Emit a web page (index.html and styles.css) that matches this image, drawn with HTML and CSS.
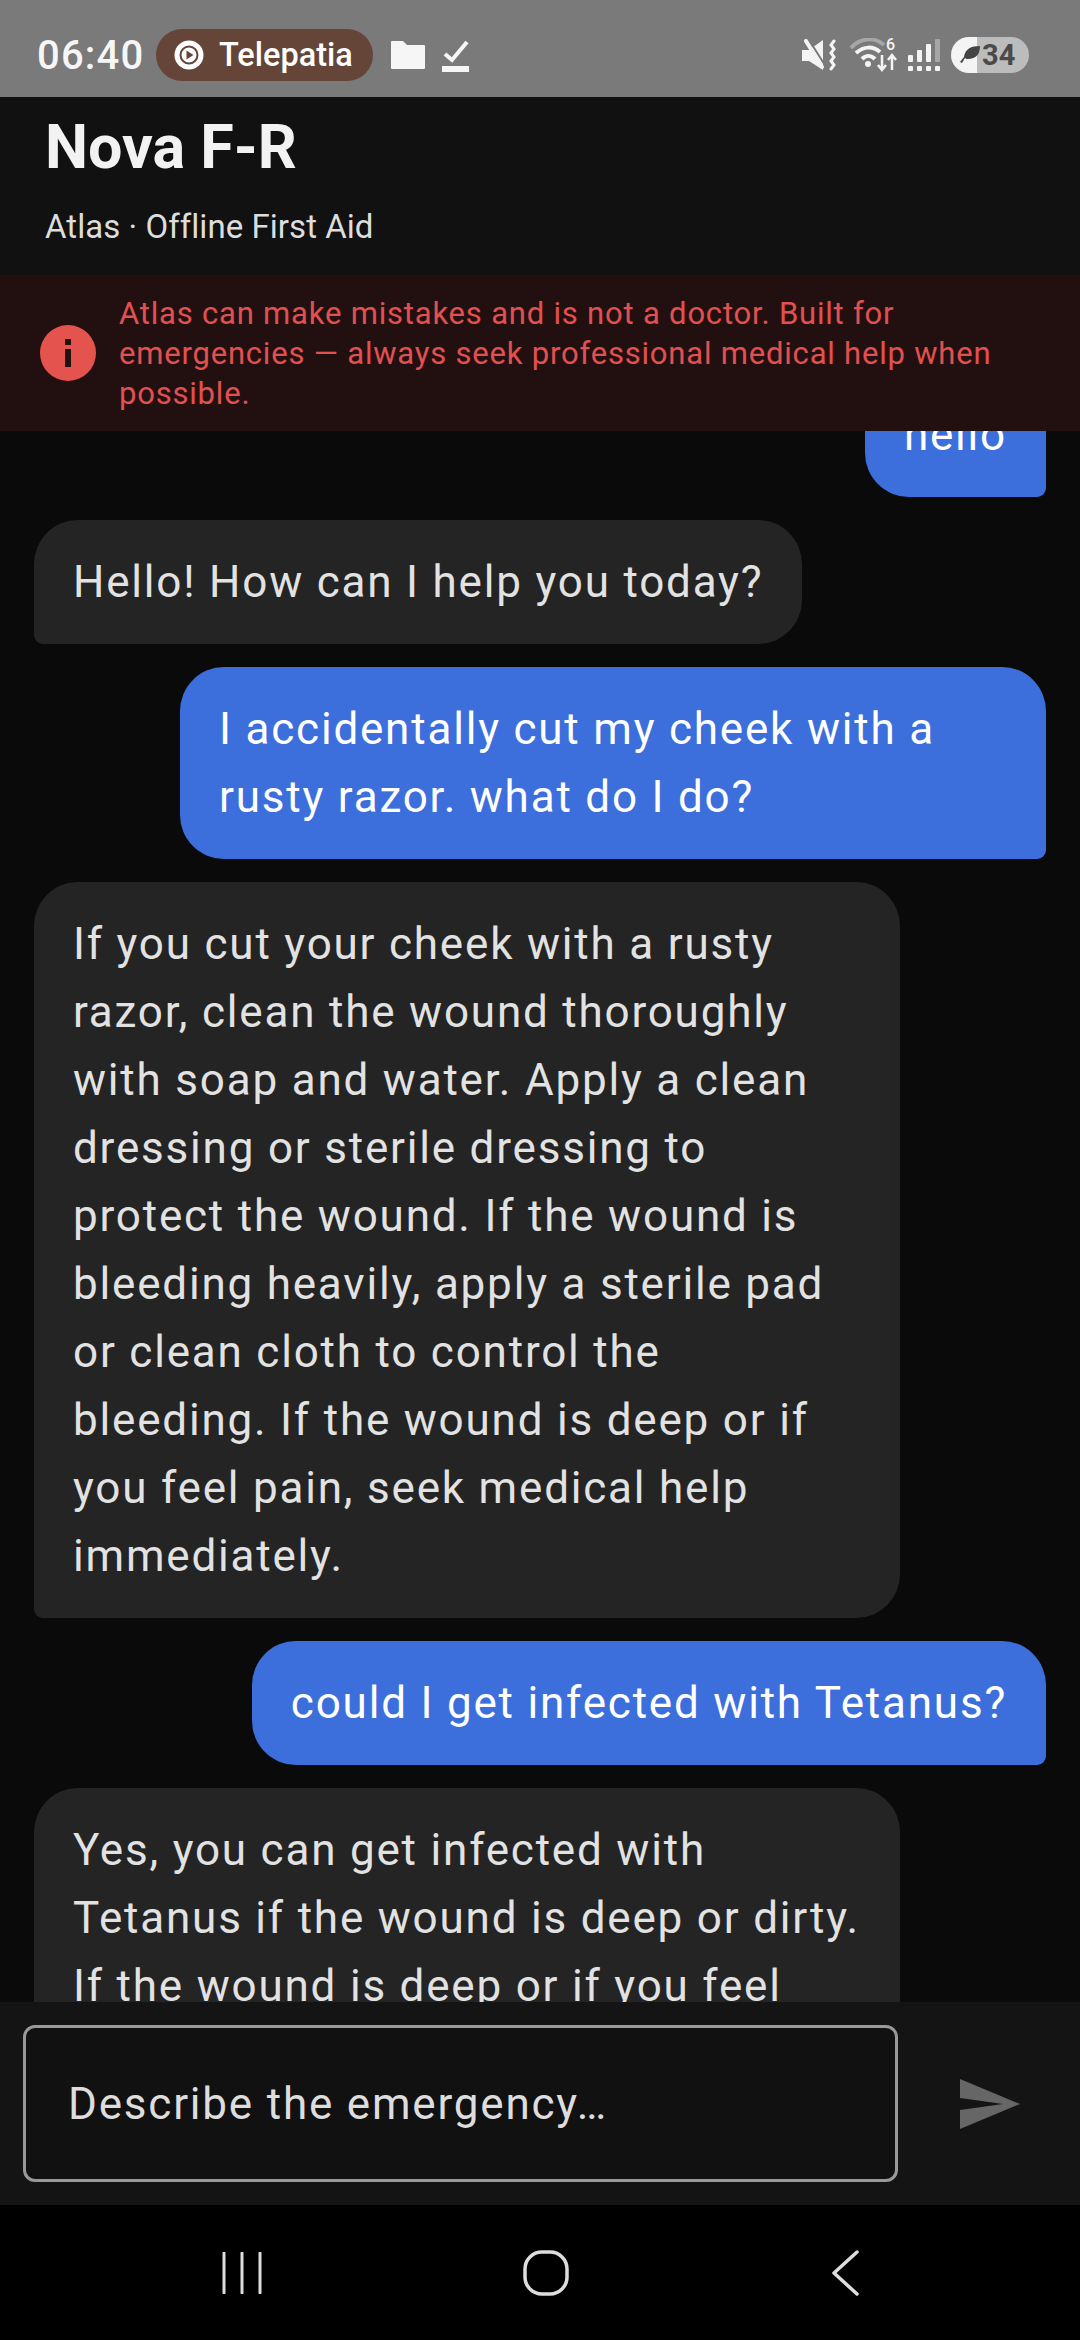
FILE: index.html
```
<!DOCTYPE html>
<html>
<head>
<meta charset="utf-8" />
<title>Nova F-R</title>
<link rel="stylesheet" href="styles.css">
</head>
<body>
<div id="wp">
	<div id="status">
		<div class="status-left">
			<span class="time">06:40</span>
			<span class="pill">
				<svg width="30" height="30" viewBox="0 0 30 30"><circle cx="15" cy="15" r="14.5" fill="#fff"/><circle cx="15" cy="15" r="8.5" fill="none" stroke="#644538" stroke-width="2"/><path d="M12.5 10.500v9l7-4.500z" fill="#644538"/></svg>
				<span class="pill-text">Telepatia</span>
			</span>
			<svg class="ico-folder" width="34" height="28" viewBox="0 0 34 28"><path d="M1 0h11l4 4h17a1 1 0 0 1 1 1v22a1 1 0 0 1-1 1H1a1 1 0 0 1-1-1V1a1 1 0 0 1 1-1z" fill="#f6f6f6"/></svg>
			<svg class="ico-check" width="27" height="33" viewBox="0 0 27 33"><path d="M3 15l7 6L25 3" fill="none" stroke="#f6f6f6" stroke-width="4"/><rect y="27" width="27" height="6" fill="#f6f6f6"/></svg>
		</div>
		<div class="status-right">
			<svg width="36" height="32" viewBox="0 0 36 32"><path d="M0 11h7L21 1v30L7 22H0z" fill="#f4f4f4"/><path d="M7 1l19 30" stroke="#7a7a7a" stroke-width="2"/><path d="M4 2l16 26" stroke="#f4f4f4" stroke-width="4" stroke-linecap="round"/><path d="M32 2l-3 4 3 4-3 4 3 4-3 4 3 4-3 4" fill="none" stroke="#f4f4f4" stroke-width="3" stroke-linecap="round"/></svg>
			<svg width="48" height="34" viewBox="0 0 48 34"><path d="M2 10C12 -1 26 -1 35 7" fill="none" stroke="#a6a6a6" stroke-width="4"/><path d="M7 15c8-7 17-7 24-1" fill="none" stroke="#f4f4f4" stroke-width="4"/><path d="M13 21c4-4 9-4 13 0" fill="none" stroke="#f4f4f4" stroke-width="4"/><circle cx="19" cy="26" r="3" fill="#f4f4f4"/><path d="M33 17v15M29 27l4 5 4-5M43 32V17M39 22l4-5 4 5" fill="none" stroke="#f4f4f4" stroke-width="2.500"/><text x="37" y="12" class="wifi-six">6</text></svg>
			<svg width="32" height="32" viewBox="0 0 32 32"><g fill="#f4f4f4"><rect x="0" y="16" width="5" height="7" rx="1"/><rect x="9" y="11" width="5" height="12" rx="1"/><rect x="18" y="5" width="5" height="18" rx="1"/><rect y="27" width="5" height="5" rx="1"/><rect x="9" y="27" width="5" height="5" rx="1"/><rect x="18" y="27" width="5" height="5" rx="1"/><rect x="27" y="27" width="5" height="5" rx="1"/></g><rect x="27" y="0" width="5" height="23" rx="1" fill="#a6a6a6"/></svg>
			<span class="batt">
				<svg class="leaf" width="20" height="18" viewBox="0 0 20 18"><path d="M4 11C5 3 11 0 20 0c0 8-4 13-12 13-1 0-2 0-3-1l-3 5-2-1 4-5z" fill="#444"/></svg>
				<span class="batt-num">34</span>
			</span>
		</div>
	</div>

	<div id="hd">
		<h1 class="title">Nova F-R</h1>
		<p class="subtitle">Atlas · Offline First Aid</p>
	</div>

	<div id="warn">
		<svg class="warn-ico" width="56" height="56" viewBox="0 0 56 56"><circle cx="28" cy="28" r="28" fill="#e5534f"/><rect x="25" y="14" width="6" height="6" fill="#221010"/><rect x="25" y="24" width="6" height="18" fill="#221010"/></svg>
		<p class="warn-text">Atlas can make mistakes and is not a doctor. Built for emergencies — always seek professional medical help when possible.</p>
	</div>

	<div id="chat">
		<div class="msgs">
			<div class="msg me">hello</div>
			<div class="msg bot">Hello! How can I help you today?</div>
			<div class="msg me">I accidentally cut my cheek with a rusty razor. what do I do?</div>
			<div class="msg bot">If you cut your cheek with a rusty razor, clean the wound thoroughly with soap and water. Apply a clean dressing or sterile dressing to protect the wound. If the wound is bleeding heavily, apply a sterile pad or clean cloth to control the bleeding. If the wound is deep or if you feel pain, seek medical help immediately.</div>
			<div class="msg me">could I get infected with Tetanus?</div>
			<div class="msg bot">Yes, you can get infected with Tetanus if the wound is deep or dirty. If the wound is deep or if you feel pain, seek medical help immediately.</div>
		</div>
	</div>

	<div id="composer">
		<div class="input">Describe the emergency…</div>
		<svg class="send" width="60" height="50" viewBox="0 0 60 50"><path d="M0 0l60 25L0 50V31l43-6L0 19z" fill="#666"/></svg>
	</div>

	<div id="nav">
		<svg width="40" height="42" viewBox="0 0 40 42"><path d="M2 1v40M20 1v40M38 1v40" stroke="#ddd" stroke-width="3" stroke-linecap="round"/></svg>
		<svg width="46" height="46" viewBox="0 0 46 46"><rect x="2" y="2" width="42" height="42" rx="17" fill="none" stroke="#ddd" stroke-width="3.500"/></svg>
		<svg width="30" height="46" viewBox="0 0 30 46"><path d="M27 2L4 23l23 21" fill="none" stroke="#ddd" stroke-width="3.500" stroke-linecap="round" stroke-linejoin="round"/></svg>
	</div>
</div>
</body>
</html>
```
FILE: styles.css
```
html * { margin:0; padding:0; box-sizing:border-box; }
body { background:#000; font-family:Roboto, "Liberation Sans", sans-serif; }
#wp { width:1080px; height:2340px; display:flex; flex-direction:column; overflow:hidden; }

#status {
	height:97px;
	background:#7a7a7a;
	display:flex;
	justify-content:space-between;
	align-items:center;
	padding:13px 51px 0 37px;
	flex:none;
}
.status-left { display:flex; align-items:center; }
.status-right { display:flex; align-items:center; gap:11px; }
.time { font-size:40px; font-weight:500; color:#f6f6f6; letter-spacing:1.2px; width:119px; }
.pill {
	display:flex;
	align-items:center;
	gap:15px;
	width:217px;
	height:52px;
	padding-left:18px;
	border-radius:26px;
	background:#644538;
}
.pill-text { font-size:32.5px; font-weight:500; color:#fff; }
.ico-folder { margin-left:18px; }
.ico-check { margin-left:17px; }
.wifi-six { font-family:Roboto, sans-serif; font-size:16px; font-weight:500; fill:#f4f4f4; }
.batt {
	display:flex;
	align-items:center;
	width:78px;
	height:36px;
	border-radius:18px;
	background:linear-gradient(to right, #f4f4f4 0, #f4f4f4 33%, #bcbcbc 33%, #bcbcbc 100%);
	padding-left:9px;
}
.batt-num { font-size:29px; font-weight:700; color:#4a4a4a; margin-left:2px; }

#hd { height:178px; background:#111; padding:13px 45px 0; flex:none; }
.title { font-size:61px; line-height:74px; font-weight:700; color:#f2f2f2; }
.subtitle { font-size:33px; line-height:40px; margin-top:23px; letter-spacing:0.05px; color:#ddd; }

#warn {
	height:156px;
	background:#221010;
	display:flex;
	align-items:center;
	gap:23px;
	padding:0 40px;
	flex:none;
}
.warn-ico { flex:none; }
.warn-text { font-size:31px; line-height:40px; letter-spacing:0.8px; padding-top:2px; color:#e25050; }

#chat { flex:1; min-height:0; background:#0a0a0a; overflow:hidden; }
.msgs { display:flex; flex-direction:column; gap:23px; padding:0 34px 0 34px; margin-top:-58px; }
.msg {
	font-size:44px;
	line-height:68px;
	letter-spacing:1.8px;
	padding:28px 39px;
	border-radius:44px;
	max-width:866px;
}
.me { align-self:flex-end; background:#3c6fdc; color:#fff; border-bottom-right-radius:9px; }
.bot { align-self:flex-start; width:866px; background:#242424; color:#e2e2e2; border-bottom-left-radius:9px; }
.bot:nth-child(2) { width:auto; }

#composer {
	height:203px;
	background:#141414;
	display:flex;
	align-items:center;
	padding:0 60px 0 23px;
	flex:none;
	justify-content:space-between;
}
.input {
	width:875px;
	height:157px;
	border:3px solid #999;
	border-radius:12px;
	background:#111;
	display:flex;
	align-items:center;
	padding-left:42px;
	font-size:44px;
	letter-spacing:1.8px;
	color:#ddd;
}

#nav {
	height:135px;
	background:#000;
	flex:none;
	display:flex;
	align-items:center;
	padding:0 220px 0 222px;
	justify-content:space-between;
}
```
